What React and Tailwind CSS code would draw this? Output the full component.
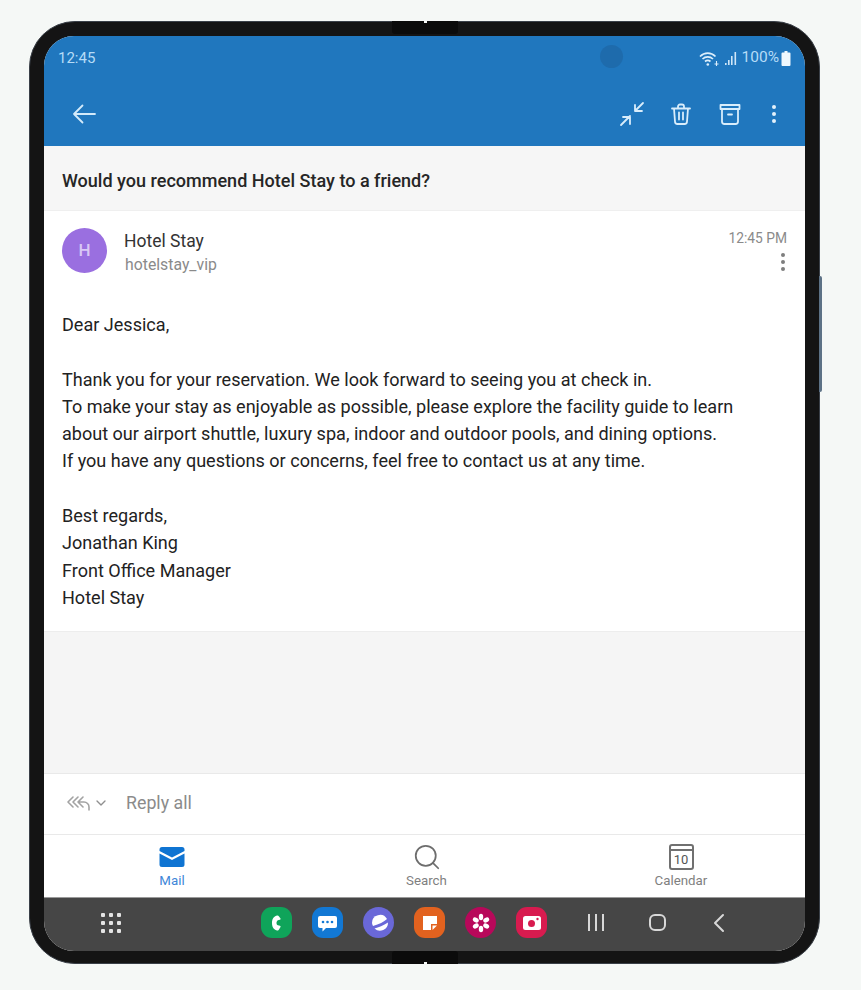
import { ChevronDown, Search } from 'lucide-react'

const BODY = [
  'Dear Jessica,',
  '',
  'Thank you for your reservation. We look forward to seeing you at check in.',
  'To make your stay as enjoyable as possible, please explore the facility guide to learn',
  'about our airport shuttle, luxury spa, indoor and outdoor pools, and dining options.',
  'If you have any questions or concerns, feel free to contact us at any time.',
  '',
  'Best regards,',
  'Jonathan King',
  'Front Office Manager',
  'Hotel Stay',
]

function Dots({ className }) {
  return (
    <div className={`flex flex-col gap-[3px] ${className}`}>
      <span className="size-1 rounded-full bg-current" />
      <span className="size-1 rounded-full bg-current" />
      <span className="size-1 rounded-full bg-current" />
    </div>
  )
}

// fold hinge, sits over the frame edge
function Hinge({ className, notch }) {
  return (
    <div className={`absolute left-[362px] flex h-[13px] w-[66px] justify-center bg-[#0b0b0b] ${className}`}>
      <span className={`absolute h-[2px] w-[3px] bg-[#f5f8f6] ${notch}`} />
    </div>
  )
}

function StatusBar() {
  return (
    <div className="flex h-[41px] items-center justify-between pl-[14px] pr-[14px] pt-[3px] text-[15px] text-[#b5dcf7]">
      <span>12:45</span>
      <div className="flex items-center gap-[2px]">
        <svg width="21" height="17" viewBox="0 0 21 17" fill="none" stroke="#dcEEfb" strokeWidth="1.700">
          <path d="M1 6.500c4.500-4.500 11-4.500 15.500 0M3.500 9c3-2.800 7.500-2.800 10.500 0M6 11.500c1.600-1.400 3.900-1.400 5.500 0" />
          <circle cx="8.800" cy="14.500" r="1.300" fill="#dcEEfb" stroke="none" />
          <path d="M17.500 11v5M15.500 14h4" strokeWidth="1.100" />
        </svg>
        <svg width="14" height="15" viewBox="0 0 14 15" fill="#cfe6f7" className="ml-[2px]">
          <rect x="1" y="12" width="1.600" height="2" />
          <rect x="4" y="9" width="1.600" height="5" />
          <rect x="7" y="5" width="1.600" height="9" />
          <rect x="10.500" y="1" width="1.600" height="13" />
        </svg>
        <span className="ml-[2px] text-[15.500px]">100%</span>
        <svg width="10" height="15" viewBox="0 0 10 15" fill="#eef7fd">
          <path d="M3.500 0h3v1.500h2a1 1 0 0 1 1 1V14a1 1 0 0 1-1 1h-7a1 1 0 0 1-1-1V2.500a1 1 0 0 1 1-1h2z" />
        </svg>
      </div>
    </div>
  )
}

function Toolbar() {
  return (
    <div className="flex flex-1 items-center justify-between pl-[28px] pr-[29px] pt-[4px]">
      <svg width="24" height="24" viewBox="0 0 24 24" fill="none" stroke="#d3eafa" strokeWidth="1.800" strokeLinecap="round" strokeLinejoin="round">
        <path d="M23 12H2M10.500 3.500 2 12l8.500 8.500" />
      </svg>
      <div className="flex items-center gap-[24px]">
        <svg width="26" height="26" viewBox="0 0 26 26" fill="none" stroke="#d9edfb" strokeWidth="1.800" strokeLinecap="round" strokeLinejoin="round">
          <path d="M24 2l-8 8M16 4v6h7M2 24l9-9M4 16h7v7" />
        </svg>
        <svg width="24" height="24" viewBox="0 0 24 24" fill="none" stroke="#d9edfb" strokeWidth="1.800" strokeLinecap="round" strokeLinejoin="round">
          <path d="M3 6.500h18M9 6.500V4.500a2 2 0 0 1 2-2h2a2 2 0 0 1 2 2v2M5 6.500l1 13a2.500 2.500 0 0 0 2.500 2.500h7a2.500 2.500 0 0 0 2.500-2.500l1-13M10 10.500v7M14 10.500v7" />
        </svg>
        <svg width="24" height="24" viewBox="0 0 24 24" fill="none" stroke="#d9edfb" strokeWidth="1.800" strokeLinecap="round" strokeLinejoin="round" className="ml-[1px]">
          <path d="M2.500 3h19v4h-19zM4 7v12.500A2.500 2.500 0 0 0 6.500 22h11a2.500 2.500 0 0 0 2.500-2.500V7M10 12.500h4" />
        </svg>
        <Dots className="ml-[6px] text-[#e3f1fb]" />
      </div>
    </div>
  )
}

function SenderRow() {
  return (
    <div className="flex items-start pl-[18px] pr-[18px] pt-[17px]">
      <div className="flex size-[45px] items-center justify-center rounded-full bg-[#9a6fe0] text-[17px] font-medium text-[#d9c8f5]">H</div>
      <div className="ml-[17px] flex flex-col">
        <span className="text-[17.500px] leading-[26px] text-[#333333]">Hotel Stay</span>
        <span className="mt-[-2px] ml-[1px] text-[15.800px] leading-[26px] text-[#8a8a8a]">hotelstay_vip</span>
      </div>
      <div className="ml-auto flex flex-col items-end">
        <span className="text-[13.800px] leading-[20px] text-[#8a8a8a]">12:45 PM</span>
        <Dots className="mr-[2px] mt-[5px] text-[#7e7e7e]" />
      </div>
    </div>
  )
}

function Tab({ label, color, children }) {
  return (
    <div className="flex w-[120px] flex-col items-center">
      <div className="flex h-[28px] items-center justify-center">{children}</div>
      <span className={`mt-[2px] text-[13.300px] leading-[16px] ${color}`}>{label}</span>
    </div>
  )
}

function AppIcon({ bg, children }) {
  return (
    <div className={`flex size-[31px] items-center justify-center rounded-[11px] ${bg}`}>{children}</div>
  )
}

function Dock() {
  return (
    <div className="flex items-center gap-[20px]">
      <AppIcon bg="bg-[#0fa45a]">
        <svg width="14" height="18" viewBox="0 0 14 18" fill="#ffffff">
          <path d="M7 1.500 C3 2.500 2 6 2 9 s1 6.500 5 7.500 c1 .2 1.500-.3 2-1 l1.500-2.500 c.3-.6 0-1-.6-1.200 l-2-.6 C7 11 6.500 10 6.500 9 s.5-2 1.400-2.700 l2-.6 c.6-.2.9-.6.6-1.200 L9 2.500 c-.5-.7-1-1.200-2-1z" />
        </svg>
      </AppIcon>
      <AppIcon bg="bg-[#1278d4]">
        <svg width="21" height="20" viewBox="0 0 21 20">
          <path d="M3 3h15a2 2 0 0 1 2 2v8a2 2 0 0 1-2 2H9l-3.500 3.500V15H3a2 2 0 0 1-2-2V5a2 2 0 0 1 2-2z" fill="#ffffff" />
          <circle cx="6" cy="9" r="1.300" fill="#1278d4" />
          <circle cx="10.500" cy="9" r="1.300" fill="#1278d4" />
          <circle cx="15" cy="9" r="1.300" fill="#1278d4" />
        </svg>
      </AppIcon>
      <AppIcon bg="bg-[#6a68d8] rounded-full">
        <svg width="24" height="22" viewBox="0 0 24 22" fill="#ffffff">
          <path d="M5 11a8 8 0 0 1 15-4c-3 3-8 5-14 7a8 8 0 0 1-1-3z" />
          <path d="M21 10.500a8 8 0 0 1-13.500 6c4-1 9-3 13.500-6z" />
        </svg>
      </AppIcon>
      <AppIcon bg="bg-[#e2621f]">
        <svg width="18" height="18" viewBox="0 0 18 18" fill="#ffffff">
          <path d="M2 2h14v8h-6v6H2z" />
          <path d="M11.500 11.500H16L11.500 16z" />
        </svg>
      </AppIcon>
      <AppIcon bg="bg-[#b8085a] rounded-full">
        <svg width="22" height="22" viewBox="0 0 22 22" fill="#ffffff">
          <ellipse cx="11" cy="5" rx="2.200" ry="3.200" />
          <ellipse cx="11" cy="17" rx="2.200" ry="3.200" />
          <ellipse cx="5.800" cy="8" rx="2.200" ry="3.200" transform="rotate(-60 5.800 8)" />
          <ellipse cx="16.200" cy="14" rx="2.200" ry="3.200" transform="rotate(-60 16.200 14)" />
          <ellipse cx="16.200" cy="8" rx="2.200" ry="3.200" transform="rotate(60 16.200 8)" />
          <ellipse cx="5.800" cy="14" rx="2.200" ry="3.200" transform="rotate(60 5.800 14)" />
          <circle cx="11" cy="11" r="1.600" fill="#b8085a" />
        </svg>
      </AppIcon>
      <AppIcon bg="bg-[#d81b4f]">
        <svg width="20" height="18" viewBox="0 0 20 18">
          <rect x="1" y="2" width="18" height="14" rx="2.500" fill="#ffffff" />
          <circle cx="9.500" cy="9.500" r="3.500" fill="#d81b4f" />
          <circle cx="15.500" cy="5" r="1.200" fill="#d81b4f" />
        </svg>
      </AppIcon>
    </div>
  )
}

export default function App() {
  return (
    <div className="h-[990px] w-[861px] overflow-hidden bg-[#f5f8f6] pl-[29px] pt-[21px] font-['Roboto',sans-serif]">
      <div className="relative h-[943px] w-[791px] rounded-[46px] border border-[#3a4048] bg-[#141414] px-[14px] pb-[12px] pt-[14px]">
        <Hinge className="top-[-1px] rounded-b-[3px]" notch="top-0" />
        <Hinge className="bottom-[-1px] rounded-t-[3px]" notch="bottom-0" />
        <div className="absolute right-[-3px] top-[254px] h-[116px] w-[3px] rounded-r-[2px] bg-[#5d7286]" />
        <div className="relative flex h-full flex-col overflow-hidden rounded-[30px] bg-white">
          <div className="absolute left-[556px] top-[9px] size-[23px] rounded-full bg-[#1e6bac]" />
          <header className="flex h-[110px] flex-col bg-[#2077be]">
            <StatusBar />
            <Toolbar />
          </header>
          <div className="flex h-[65px] items-center border-b border-[#efefef] bg-[#f6f6f6] pl-[18px] pt-[5px] text-[18.050px] font-medium text-[#262626]">
            Would you recommend Hotel Stay to a friend?
          </div>
          <section className="h-[421px] border-b border-[#ededed] bg-white">
            <SenderRow />
            <div className="mt-[33px] pl-[18px] text-[18.060px] leading-[27.300px] text-[#222222]">
              {BODY.map((line, i) => (
                <div className="h-[27.300px] whitespace-nowrap" key={i}>{line}</div>
              ))}
            </div>
          </section>
          <div className="flex-1 bg-[#f5f5f5]" />
          <div className="flex h-[62px] items-center border-y border-[#e9e9e9] bg-white pb-[2px] pl-[23px] text-[#8b8b8b]">
            <svg width="24" height="18" viewBox="0 0 24 18" fill="none" stroke="#a3a3a3" strokeWidth="1.600" strokeLinecap="round" strokeLinejoin="round">
              <path d="M6 3 1 8l5 5M11 3 6 8l5 5M16 3l-5 5 5 5M11 8h6a5 5 0 0 1 5 5v3" />
            </svg>
            <ChevronDown size={16} strokeWidth={2} className="ml-[2px] text-[#8f8f8f]" />
            <span className="ml-[17px] text-[17.800px]">Reply all</span>
          </div>
          <nav className="flex h-[62px] items-center justify-between bg-white pl-[68px] pr-[64px]">
            <Tab label="Mail" color="text-[#3e87d8]">
              <svg width="26" height="22" viewBox="0 0 26 22">
                <path d="M3 1h20a2.500 2.500 0 0 1 2.500 2.500V5L13 11.500.500 5V3.500A2.500 2.500 0 0 1 3 1z" fill="#0f74d2" />
                <path d="M.500 7.500 13 14l12.500-6.500v11a2.500 2.500 0 0 1-2.500 2.500H3a2.500 2.500 0 0 1-2.500-2.500z" fill="#0f74d2" />
              </svg>
            </Tab>
            <Tab label="Search" color="text-[#7f7f7f]">
              <Search size={30} strokeWidth={1.400} className="text-[#6d6d6d]" />
            </Tab>
            <Tab label="Calendar" color="text-[#7f7f7f]">
              <div className="flex h-[26px] w-[25px] flex-col rounded-[3px] border-2 border-[#707070]">
                <div className="h-[5px] border-b-2 border-[#707070]" />
                <span className="flex-1 text-center text-[13px] leading-[17px] text-[#555555]">10</span>
              </div>
            </Tab>
          </nav>
          <footer className="flex h-[54px] items-center border-t border-[#9a9a9a] bg-[#464646] pb-[4px] pl-[57px]">
            <div className="grid grid-cols-3 gap-[4px]">
              {[0, 1, 2, 3, 4, 5, 6, 7, 8].map((d) => (
                <span className="size-[4px] rounded-[1px] bg-[#e4e4e4]" key={d} />
              ))}
            </div>
            <div className="ml-[140px]">
              <Dock />
            </div>
            <div className="ml-[41px] flex items-center text-[#d8d8d8]">
              <div className="flex gap-[5px]">
                <span className="h-[17px] w-[2px] bg-current" />
                <span className="h-[17px] w-[2px] bg-current" />
                <span className="h-[17px] w-[2px] bg-current" />
              </div>
              <div className="ml-[45px] size-[17px] rounded-[6px] border-2 border-current" />
              <svg width="12" height="20" viewBox="0 0 12 20" fill="none" stroke="currentColor" strokeWidth="2" strokeLinecap="round" strokeLinejoin="round" className="ml-[47px]">
                <path d="M10 2 2 10l8 8" />
              </svg>
            </div>
          </footer>
        </div>
      </div>
    </div>
  )
}
